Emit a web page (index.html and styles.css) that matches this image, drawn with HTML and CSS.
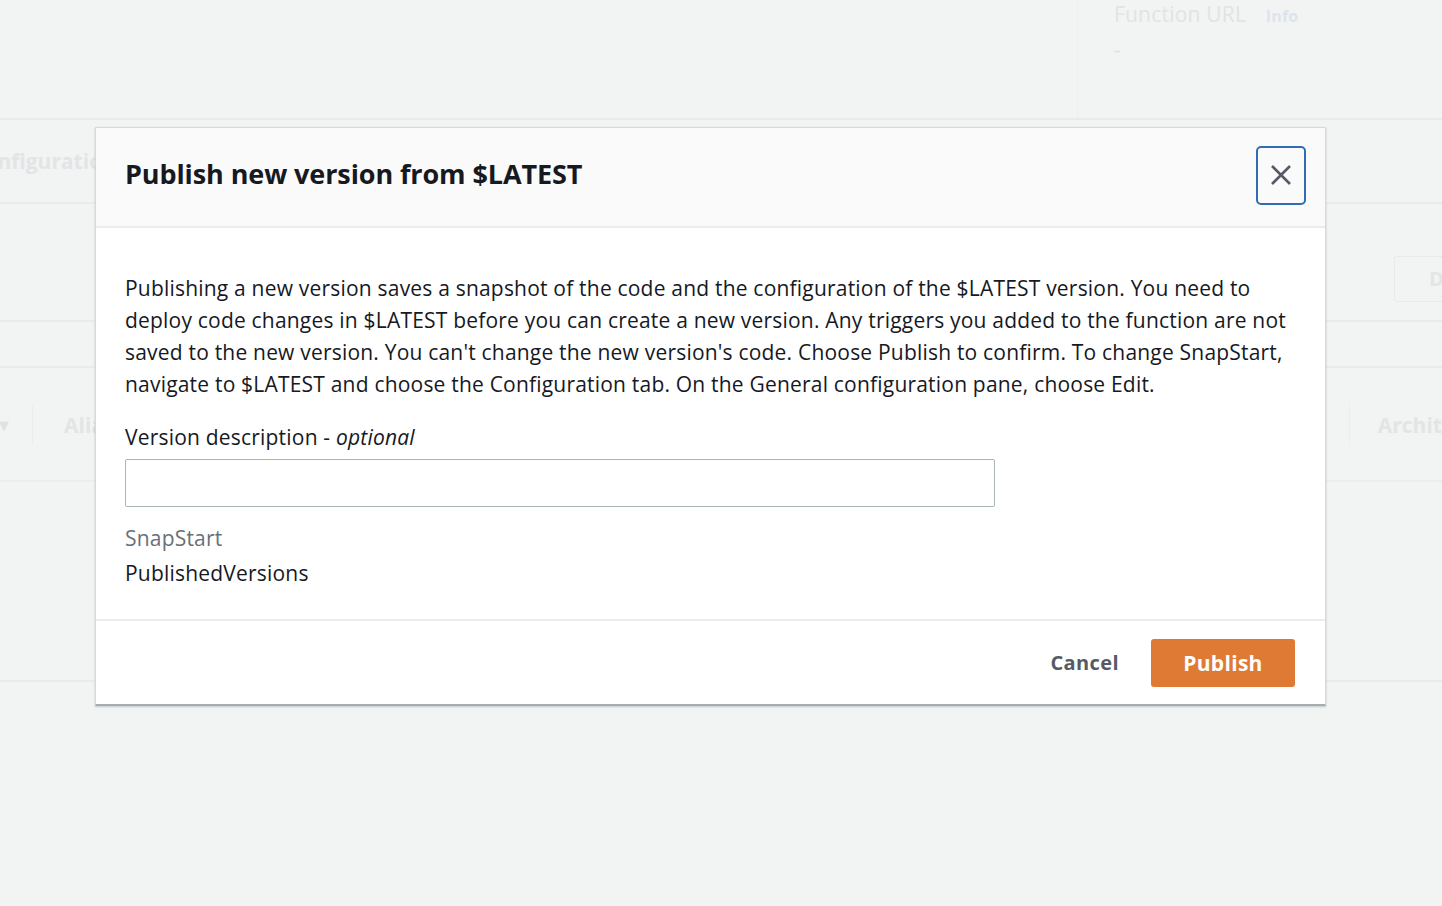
FILE: index.html
```html
<!DOCTYPE html>
<html lang="en">
<head>
<meta charset="utf-8">
<title>Publish new version</title>
<link rel="stylesheet" href="styles.css">
</head>
<body>
<div class="page">
  <div class="top">
    <div class="top-left"></div>
    <div class="top-right">
      <div class="furl">Function URL <span class="info">Info</span></div>
      <div class="dash">-</div>
    </div>
  </div>
  <div class="tabs"><span class="tab">Configuration</span></div>
  <div class="toolbar"><span class="ghost-btn">Delete</span></div>
  <div class="gap-row"></div>
  <div class="thead">
    <span class="caret">▼</span>
    <span class="th th-alias">Alias</span>
    <span class="th th-arch">Architecture</span>
  </div>
  <div class="tbody"></div>
</div>

<div class="modal" role="dialog">
  <div class="modal-header">
    <h2 class="modal-title">Publish new version from $LATEST</h2>
    <button class="close" aria-label="Close">
      <svg width="22" height="22" viewBox="0 0 22 22"><path d="M2 2 L20 20 M20 2 L2 20" stroke="#545b64" stroke-width="2.6" fill="none"/></svg>
    </button>
  </div>
  <div class="modal-body">
    <p class="desc">Publishing a new version saves a snapshot of the code and the configuration of the $LATEST version. You need to<br>deploy code changes in $LATEST before you can create a new version. Any triggers you added to the function are not<br>saved to the new version. You can't change the new version's code. Choose Publish to confirm. To change SnapStart,<br>navigate to $LATEST and choose the Configuration tab. On the General configuration pane, choose Edit.</p>
    <label class="label">Version description - <i>optional</i></label>
    <input class="input" type="text">
    <div class="kv-key">SnapStart</div>
    <div class="kv-val">PublishedVersions</div>
  </div>
  <div class="modal-footer">
    <button class="btn-link">Cancel</button>
    <button class="btn-primary">Publish</button>
  </div>
</div>
</body>
</html>
```

FILE: styles.css
```css
* { box-sizing: border-box; }
html, body { margin: 0; padding: 0; }
body {
  background: #f2f3f3;
  font-family: "Open Sans", "Noto Sans", "Liberation Sans", sans-serif;
  color: #16191f;
  width: 1442px;
  height: 906px;
  overflow: hidden;
}
.page { width: 1442px; }
.top { display: flex; height: 120px; border-bottom: 2px solid #e9ebeb; }
.top-left { width: 1078px; border-right: 1px solid #eef0f0; }
.top-right { padding: 0 0 0 36px; }
.furl { font-size: 21px; color: #e1e3e4; line-height: 28px; letter-spacing: 0.2px; }
.info { font-size: 16px; font-weight: 700; color: #dde4ee; margin-left: 14px; }
.dash { color: #dcdfe0; font-size: 20px; line-height: 40px; }
.tabs { height: 84px; border-bottom: 2px solid #e9ebeb; display: flex; align-items: center; overflow: hidden; }
.tab { font-size: 21px; font-weight: 700; color: #e2e4e5; margin-left: -29px; }
.toolbar { height: 118px; border-bottom: 2px solid #e9ebeb; display: flex; justify-content: flex-end; align-items: center; padding-top: 34px; overflow: hidden; }
.ghost-btn { border: 1px solid #e8eaea; border-radius: 3px; width: 120px; margin-right: -72px; height: 46px; line-height: 44px; padding-left: 34px; font-weight: 700; font-size: 20px; color: #e3e5e6; }
.gap-row { height: 46px; border-bottom: 2px solid #e9ebeb; }
.thead { height: 114px; border-bottom: 2px solid #ecedee; display: flex; align-items: center; position: relative; overflow: hidden; padding-top: 2px; }
.caret { color: #dfe1e2; font-size: 16px; margin-left: -4px; width: 37px; border-right: 1px solid #ebeded; line-height: 40px; }
.th { font-size: 21px; font-weight: 700; color: #e2e4e5; }
.th-alias { margin-left: 31px; }
.th-arch { margin-left: auto; margin-right: -68px; border-left: 1px solid #ebeded; padding-left: 28px; line-height: 40px; }
.tbody { height: 200px; border-bottom: 2px solid #e9ebeb; }

.modal {
  position: absolute;
  left: 95px;
  top: 127px;
  width: 1231px;
  background: #fff;
  border: 1px solid #d5dbdb;
  border-bottom: 2px solid #a6adb1;
  box-shadow: 0 1px 2px rgba(0,28,36,.2);
}
.modal-header {
  background: #fafafa;
  height: 100px;
  border-bottom: 2px solid #eaeded;
  display: flex;
  align-items: center;
  padding: 0 18px 0 29px;
}
.modal-title { margin: 0; font-size: 27px; font-weight: 700; flex: 1; letter-spacing: -0.1px; padding-bottom: 8px; }
.close {
  width: 50px; height: 59px;
  border: 2px solid #2e6db3;
  border-radius: 5px;
  background: transparent;
  display: flex; align-items: center; justify-content: center;
  padding: 0;
  margin-top: -4px;
  margin-right: 1px;
}
.modal-body { padding: 44px 29px 31px; border-bottom: 2px solid #eaeded; }
.desc { margin: 0 0 23px; font-size: 21px; line-height: 32px; white-space: nowrap; letter-spacing: 0.2px; }
.label { display: block; font-size: 21px; line-height: 28px; margin-bottom: 8px; letter-spacing: 0.2px; }
.input { display: block; width: 870px; height: 48px; border: 1px solid #aab7b8; border-radius: 2px; background: #fff; margin-bottom: 16px; }
.kv-key { font-size: 21px; color: #687078; line-height: 30px; margin-bottom: 5px; letter-spacing: 0.2px; }
.kv-val { font-size: 21px; line-height: 30px; letter-spacing: 0.2px; }
.modal-footer { display: flex; justify-content: flex-end; align-items: center; height: 83px; padding: 0 30px 0; }
.btn-link { background: none; border: none; font-family: inherit; font-size: 20px; font-weight: 700; color: #545b64; margin-right: 32px; padding: 0; letter-spacing: 0.4px; }
.btn-primary { background: #df7a34; color: #fff; border: none; border-radius: 3px; width: 144px; height: 48px; font-family: inherit; font-size: 21px; font-weight: 700; letter-spacing: 0.3px; }
```
